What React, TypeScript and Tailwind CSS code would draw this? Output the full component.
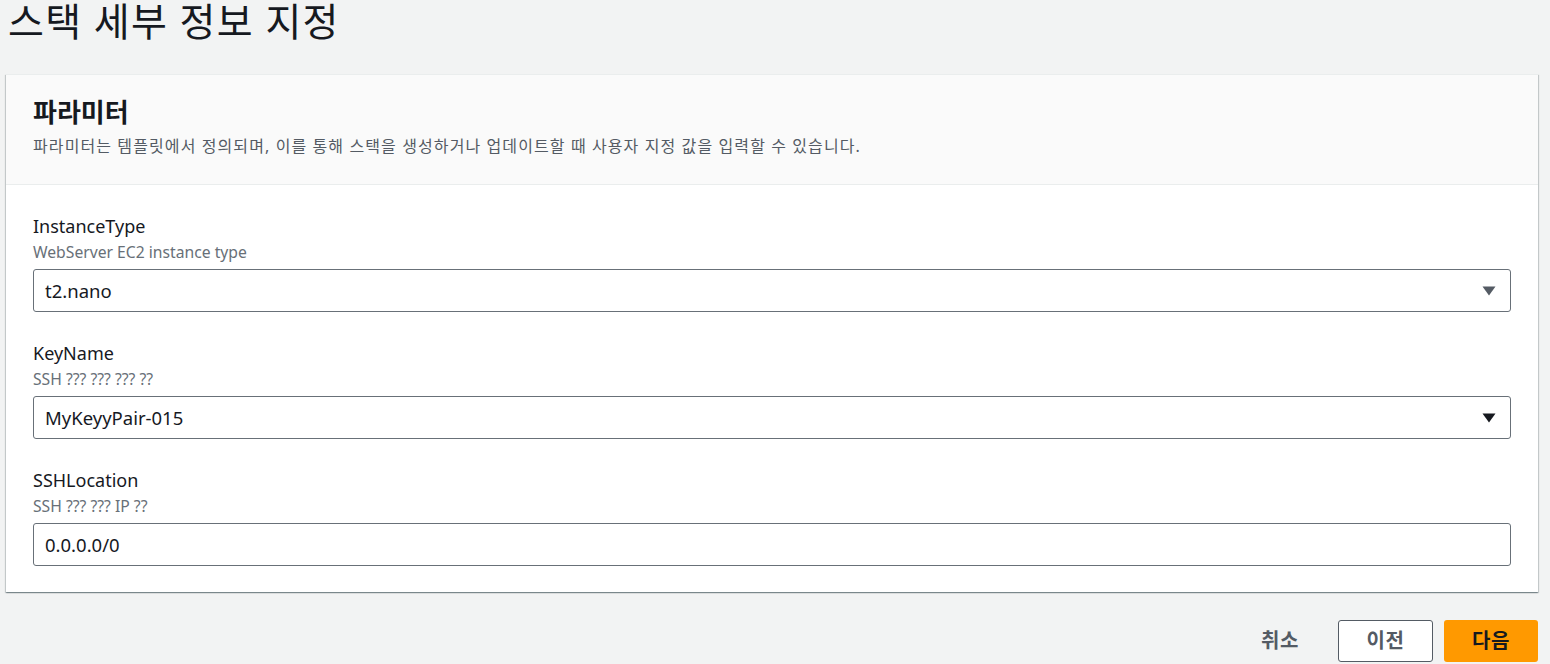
import React from "react";

const font = { fontFamily: '"Noto Sans", "Noto Sans CJK KR", sans-serif' };

function Arrow({ color }: { color: string }) {
  return (
    <svg width="14" height="10" viewBox="0 0 14 10" className="shrink-0">
      <path d="M0.5 0.5 L13.5 0.5 L7 9.5 Z" fill={color} />
    </svg>
  );
}

function Field({
  label,
  desc,
  value,
  select,
  arrowColor,
}: {
  label: string;
  desc: string;
  value: string;
  select?: boolean;
  arrowColor?: string;
}) {
  return (
    <div className="flex flex-col">
      <div className="text-[18px] leading-[24px] text-[#16191f]">{label}</div>
      <div className="text-[15.7px] leading-[20px] text-[#687078] mt-[4px]">{desc}</div>
      <div className="mt-[7px] h-[43px] border border-[#687078] rounded-[3px] bg-white flex items-center justify-between pl-[11px] pr-[14px]">
        <span className="text-[18.5px] text-[#16191f]">{value}</span>
        {select && <Arrow color={arrowColor || "#16191f"} />}
      </div>
    </div>
  );
}

export default function App() {
  return (
    <div className="min-h-[664px] bg-[#f2f3f3] overflow-hidden" style={font}>
      <div className="pl-[8px] h-[74px]">
        <h1 className="text-[39px] leading-[42px] tracking-[1.3px] text-[#16191f] font-normal">스택 세부 정보 지정</h1>
      </div>
      <div className="ml-[6px] w-[1532px] bg-white border-t border-[#eaeded] shadow-[0_1px_1px_0_rgba(0,28,36,0.3),1px_1px_1px_0_rgba(0,28,36,0.15),-1px_1px_1px_0_rgba(0,28,36,0.15)]">
        <div className="bg-[#fafafa] border-b border-[#eaeded] h-[110px] px-[27px] pt-[22px]">
          <h2 className="text-[26px] leading-[30px] font-bold text-[#16191f]">파라미터</h2>
          <p className="text-[16px] leading-[22px] tracking-[1.1px] text-[#545b64] mt-[8px]">
            파라미터는 템플릿에서 정의되며, 이를 통해 스택을 생성하거나 업데이트할 때 사용자 지정 값을 입력할 수 있습니다.
          </p>
        </div>
        <div className="px-[27px] pt-[29px] pb-[26px] flex flex-col gap-[29px]">
          <Field label="InstanceType" desc="WebServer EC2 instance type" value="t2.nano" select arrowColor="#545b64" />
          <Field label="KeyName" desc="SSH ??? ??? ??? ??" value="MyKeyyPair-015" select arrowColor="#16191f" />
          <Field label="SSHLocation" desc="SSH ??? ??? IP ??" value="0.0.0.0/0" />
        </div>
      </div>
      <div className="flex justify-end items-center mt-[28px] pr-[12px] gap-[11px]">
        <button className="h-[42px] w-[94px] text-[20px] font-bold tracking-[0.5px] text-[#545b64]">취소</button>
        <button className="h-[42px] w-[95px] border border-[#545b64] rounded-[3px] bg-white text-[20px] font-bold tracking-[0.5px] text-[#545b64]">이전</button>
        <button className="h-[42px] w-[94px] rounded-[3px] bg-[#ff9900] text-[20px] font-bold tracking-[0.5px] text-[#16191f]">다음</button>
      </div>
    </div>
  );
}
